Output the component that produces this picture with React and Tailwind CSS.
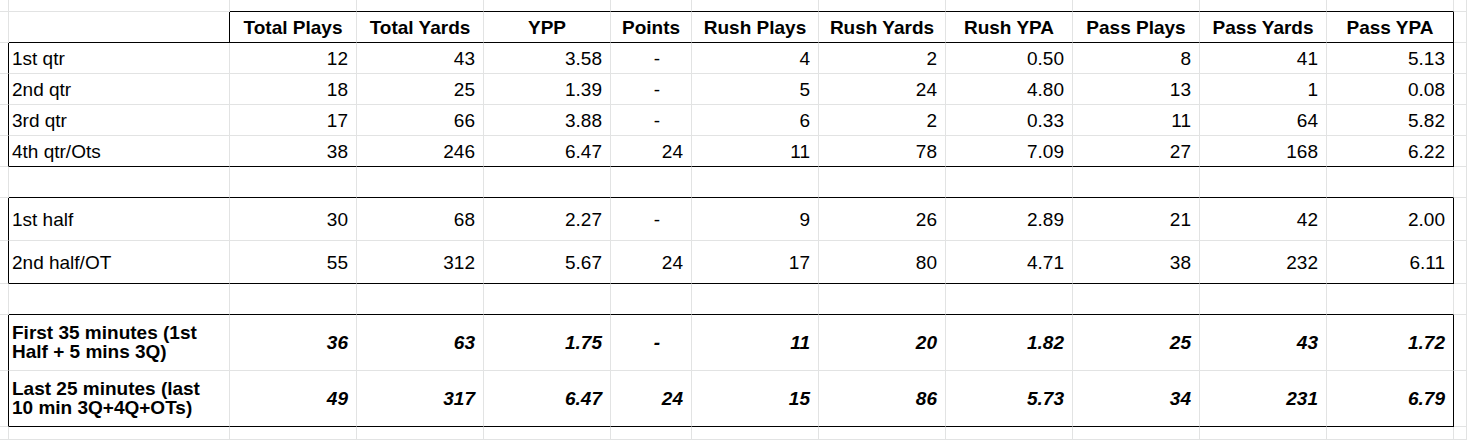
import React from "react";

const headers = [
  "Total Plays",
  "Total Yards",
  "YPP",
  "Points",
  "Rush Plays",
  "Rush Yards",
  "Rush YPA",
  "Pass Plays",
  "Pass Yards",
  "Pass YPA",
];

// kind: top | head | data | gap | bottom
const rows = [
  { kind: "top", h: "h-[12px]", lineBelow: "header" },
  { kind: "head", h: "h-[31px]", lineBelow: "all" },
  { kind: "data", h: "h-[31px]", label: "1st qtr", vals: ["12", "43", "3.58", "-", "4", "2", "0.50", "8", "41", "5.13"] },
  { kind: "data", h: "h-[31px]", label: "2nd qtr", vals: ["18", "25", "1.39", "-", "5", "24", "4.80", "13", "1", "0.08"] },
  { kind: "data", h: "h-[31px]", label: "3rd qtr", vals: ["17", "66", "3.88", "-", "6", "2", "0.33", "11", "64", "5.82"] },
  { kind: "data", h: "h-[31px]", label: "4th qtr/Ots", vals: ["38", "246", "6.47", "24", "11", "78", "7.09", "27", "168", "6.22"], lineBelow: "all" },
  { kind: "gap", h: "h-[31px]", lineBelow: "all" },
  { kind: "data", h: "h-[43px]", label: "1st half", vals: ["30", "68", "2.27", "-", "9", "26", "2.89", "21", "42", "2.00"] },
  { kind: "data", h: "h-[43px]", label: "2nd half/OT", vals: ["55", "312", "5.67", "24", "17", "80", "4.71", "38", "232", "6.11"], lineBelow: "all" },
  { kind: "gap", h: "h-[31px]", lineBelow: "all" },
  { kind: "data", h: "h-[56px]", bold: true, label: ["First 35 minutes (1st", "Half + 5 mins 3Q)"], vals: ["36", "63", "1.75", "-", "11", "20", "1.82", "25", "43", "1.72"] },
  { kind: "data", h: "h-[56px]", bold: true, label: ["Last 25 minutes (last", "10 min 3Q+4Q+OTs)"], vals: ["49", "317", "6.47", "24", "15", "86", "5.73", "34", "231", "6.79"], lineBelow: "all" },
  { kind: "bottom", h: "h-[13px]" },
];

function Cell({ row, col, children, className = "" }) {
  // col: 0 = margin, 1 = label (A), 2..11 = numbers, 12 = trailing
  let right = "border-r-[#e2e3e3]";
  if (row.kind === "head" && (col === 1 || col === 11)) right = "border-r-black";
  if (row.kind === "data" && (col === 0 || col === 11)) right = "border-r-black";

  let bottom = "border-b-[#e2e3e3]";
  if (row.lineBelow === "all" && col >= 1 && col <= 11) bottom = "border-b-black";
  if (row.lineBelow === "header" && col >= 2 && col <= 11) bottom = "border-b-black";

  return (
    <div className={`${row.h} border-r border-b ${right} ${bottom} flex items-center min-w-0 ${className}`}>
      {children}
    </div>
  );
}

function Row({ row }) {
  const cells = [];
  for (let c = 0; c < 13; c++) {
    let content = null;
    let cls = "";
    if (row.kind === "head" && c >= 2 && c <= 11) {
      content = headers[c - 2];
      cls = "justify-center font-bold whitespace-nowrap";
    } else if (row.kind === "data" && c === 1) {
      if (Array.isArray(row.label)) {
        content = (
          <span className="leading-[18.4px] whitespace-nowrap">
            {row.label[0]}
            <br />
            {row.label[1]}
          </span>
        );
      } else {
        content = row.label;
      }
      cls = `pl-[3px] whitespace-nowrap ${row.bold ? "font-bold" : ""}`;
    } else if (row.kind === "data" && c >= 2 && c <= 11) {
      const v = row.vals[c - 2];
      content = v;
      const dash = v === "-";
      cls = `justify-end whitespace-nowrap ${dash ? "pr-[31px]" : "pr-[8px]"} ${row.bold ? "font-bold italic" : ""}`;
    }
    cells.push(
      <Cell key={c} row={row} col={c} className={cls}>
        {content}
      </Cell>
    );
  }
  return <>{cells}</>;
}

export default function App() {
  return (
    <div
      className="w-[1467px] h-[440px] overflow-hidden bg-white text-black text-[19px] leading-none"
      style={{ fontFamily: '"Liberation Sans", Arial, sans-serif' }}
    >
      <div className="grid grid-cols-[9px_221px_127px_127px_127px_81px_127px_127px_127px_127px_127px_127px_13px]">
        {rows.map((r, i) => (
          <Row key={i} row={r} />
        ))}
      </div>
    </div>
  );
}
